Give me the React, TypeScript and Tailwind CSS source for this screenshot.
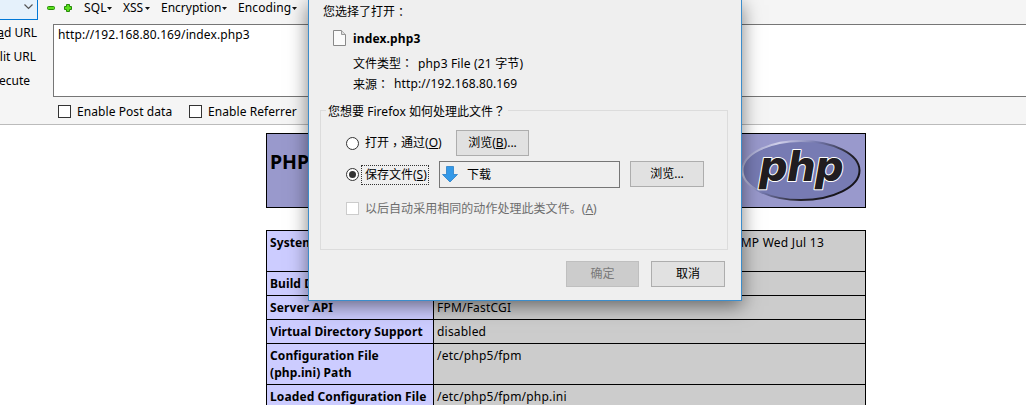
import type { ReactNode } from "react";

function Check({ label, className }: { label: string; className: string }) {
  return (
    <label className={`flex items-center gap-[6px] ${className}`}>
      <span className="h-[13px] w-[13px] border border-[#333] bg-white" />
      {label}
    </label>
  );
}

function Toolbar() {
  return (
    <header className="h-[125px] w-full border-b border-[#bbbbbb] bg-[#f5f5f5]">
      <div className="flex h-[20px]">
        <div className="flex w-[38px] justify-end border-r border-b border-[#0078d7] bg-[#e5f1fb] pr-[4px]">
          <svg className="mt-[3px] h-[8px] w-[9px]" viewBox="0 0 9 8" fill="none" stroke="#555" strokeWidth="1.2">
            <path d="M.5 1.5 4.5 5.5 8.5 1.5" />
          </svg>
        </div>
        <svg className="ml-[9px] mt-[4px] h-[8px] w-[8px]" viewBox="0 0 8 8">
          <rect x=".5" y="2.5" width="7" height="3" rx="1" fill="#5be01c" stroke="#278a08" />
        </svg>
        <svg className="ml-[9px] mt-[4px] h-[8px] w-[8px]" viewBox="0 0 8 8">
          <path d="M2.5.5h3v2h2v3h-2v2h-3v-2h-2v-3h2z" fill="#5be01c" stroke="#278a08" strokeLinejoin="round" />
        </svg>
        <nav className="flex h-[16px] items-center pl-[12px]">
          <MenuItem className="w-[39px]" text="w-[23px] tracking-[0.1px]" label="SQL" />
          <MenuItem className="w-[38px]" text="w-[22px]" label="XSS" />
          <MenuItem className="w-[77px]" text="w-[61px]" label="Encryption" />
          <MenuItem className="w-[70px]" text="w-[54px] tracking-[0.1px]" label="Encoding" />
        </nav>
      </div>
      <div className="mt-[4px] flex h-[73px]">
        <div className="flex w-[53px] flex-col items-end leading-[24px]">
          <div className="-mt-[3px] mr-[16px] whitespace-nowrap">Lo<u>a</u>d URL</div>
          <div className="mr-[17px] whitespace-nowrap">Split URL</div>
          <div className="mr-[23px] whitespace-nowrap">Execute</div>
        </div>
        <div className="flex-1 border border-r-0 border-[#767676] bg-white pl-[4px] leading-[20px] tracking-[0.11px]">
          http://192.168.80.169/index.php3
        </div>
      </div>
      <div className="flex h-[27px] items-center pt-[2px] pl-[58px] tracking-[0.07px]">
        <Check label="Enable Post data" className="w-[131px]" />
        <Check label="Enable Referrer" className="w-[130px]" />
      </div>
    </header>
  );
}

function MenuItem({ label, className, text }: { label: string; className: string; text: string }) {
  return (
    <div className={`flex shrink-0 items-center whitespace-nowrap ${className}`}>
      <span className={text}>{label}</span>
      <svg className="h-[3px] w-[5px]" viewBox="0 0 5 3">
        <path d="M0 0h5L2.500 3z" fill="#111" />
      </svg>
    </div>
  );
}

function PhpLogo() {
  return (
    <svg className="h-[64px] w-[120px]" viewBox="0 0 120 64">
      <defs>
        <linearGradient id="rim" x1="0" y1="0" x2="1" y2=".55">
          <stop offset="0" stopColor="#7478ad" />
          <stop offset=".25" stopColor="#d0d0ea" />
          <stop offset=".5" stopColor="#7377ac" />
          <stop offset=".8" stopColor="#25232b" />
          <stop offset="1" stopColor="#17151b" />
        </linearGradient>
      </defs>
      <ellipse cx="60" cy="32.500" rx="58.500" ry="29.500" fill="#777bb3" stroke="url(#rim)" strokeWidth="2" />
      <g fontFamily="Inter, sans-serif" fontSize="42" fontWeight="800" fontStyle="italic" strokeLinejoin="round">
        <text
          x="18.500"
          y="43"
          textLength="84"
          lengthAdjust="spacingAndGlyphs"
          fill="#211d20"
          stroke="#fff"
          strokeWidth="2"
          paintOrder="stroke"
        >
          php
        </text>
      </g>
    </svg>
  );
}

function Row({ name, value, height }: { name: ReactNode; value?: ReactNode; height: string }) {
  return (
    <div className={`flex border-b border-black leading-[17px] ${height}`}>
      <div className="w-[167px] shrink-0 whitespace-nowrap border-r border-black bg-[#ccccff] pt-[3px] pl-[3px] font-bold tracking-[0.1px]">
        {name}
      </div>
      <div className="flex-1 bg-[#cccccc] pt-[3px] pl-[3px] tracking-[0.2px]">{value}</div>
    </div>
  );
}

function PhpInfo() {
  return (
    <main className="ml-[266px] w-[600px] pt-[8px]">
      <div className="flex h-[75px] items-start justify-between border border-black bg-[#9999cc] pt-[4px] pr-[4px] pl-[3px]">
        <h1 className="mt-[10px] whitespace-nowrap text-[19.5px] leading-[28px] font-bold">PHP Version</h1>
        <PhpLogo />
      </div>
      <div className="mt-[22px] border border-b-0 border-black">
        <Row name="System" height="h-[41px]" value={<div className="pr-[41px] text-right tracking-[0.25px]">SMP Wed Jul 13</div>} />
        <Row name="Build Date" height="h-[24px]" />
        <Row name="Server API" height="h-[24px]" value="FPM/FastCGI" />
        <Row name="Virtual Directory Support" height="h-[24px]" value="disabled" />
        <Row name={<>Configuration File<br />(php.ini) Path</>} height="h-[41px]" value="/etc/php5/fpm" />
        <Row name="Loaded Configuration File" height="h-[24px]" value="/etc/php5/fpm/php.ini" />
      </div>
    </main>
  );
}

function Button({ children, className, disabled }: { children: ReactNode; className: string; disabled?: boolean }) {
  const look = disabled ? "border-[#bfbfbf] bg-[#cccccc] text-[#7a7a7a]" : "border-[#adadad] bg-[#e1e1e1]";
  return (
    <button className={`flex h-[26px] items-center justify-center border whitespace-nowrap ${look} ${className}`}>
      {children}
    </button>
  );
}

function Mark({ children }: { children: string }) {
  return <span className="font-['Noto_Sans_CJK_TC',sans-serif]" lang="zh-TW">{children}</span>;
}

function Radio({ on }: { on?: boolean }) {
  return (
    <svg className="h-[13px] w-[13px] shrink-0" viewBox="0 0 13 13">
      <circle cx="6.500" cy="6.500" r="6" fill="#fff" stroke="#333" />
      {on && <circle cx="6.500" cy="6.500" r="3.500" fill="#333" />}
    </svg>
  );
}

function Dialog() {
  return (
    <section className="absolute top-0 left-[308px] h-[301px] w-[434px] border border-t-0 border-[#3c8dcb] bg-[#efefef] whitespace-nowrap shadow-[0_5px_18px_rgba(0,0,0,0.5)]">
      <div className="flex h-[24px] items-center pl-[14px]">您选择了打开<Mark>：</Mark></div>
      <div className="flex h-[28px] items-center pl-[24px]">
        <svg className="h-[16px] w-[13px]" viewBox="0 0 13 16">
          <path d="M.5.5h8l4 4v11H.5z" fill="#fafafa" stroke="#888" />
          <path d="M8.500.5v4h4" fill="#ddd" stroke="#999" />
        </svg>
        <b className="mt-px ml-[7px] tracking-[0.15px]">index.php3</b>
      </div>
      <div className="flex h-[22px] items-center pl-[44px]">
        <span className="w-[65px]">文件类型<Mark>：</Mark></span>
        <span className="mt-px tracking-[0.16px]">php3 File (21 字节)</span>
      </div>
      <div className="flex h-[20px] items-center pl-[44px]">
        <span className="w-[41px]">来源<Mark>：</Mark></span>
        <span className="tracking-[0.12px]">http://192.168.80.169</span>
      </div>
      <div className="mt-[16px] ml-[11px] h-[140px] w-[408px] border border-[#dcdcdc]">
        <div className="-mt-[10px] ml-[5px] h-[20px] w-[182px] bg-[#efefef] pl-[2px] leading-[20px] tracking-[0.03px]">
          您想要 Firefox 如何处理此文件<Mark>？</Mark>
        </div>
        <div className="mt-[9px] flex h-[26px] items-center pl-[25px]">
          <Radio />
          <span className="ml-[6px] flex w-[91px] pt-px">
            打开<span className="pt-[3px] pb-0 leading-[15px]"><Mark>，</Mark></span>
            <span>通过(<u>O</u>)</span>
          </span>
          <Button className="w-[73px]">浏览(<u>B</u>)...</Button>
        </div>
        <div className="mt-[5px] flex h-[27px] items-center pl-[25px]">
          <Radio on />
          <span className="ml-[2px] flex h-[20px] w-[68px] items-center border border-dotted border-[#333] pl-[3px]">
            <span>保存文件(<u>S</u>)</span>
          </span>
          <div className="ml-[10px] flex h-[27px] w-[181px] items-center border border-[#767676] pl-[2px]">
            <svg className="h-[17px] w-[16px]" viewBox="0 0 16 17">
              <path d="M4.500.5h7v8h4L8 16 .5 8.500h4z" fill="#3399e8" stroke="#2a7fc8" strokeWidth=".8" />
            </svg>
            <span className="ml-[9px]">下载</span>
          </div>
          <Button className="-mt-px ml-[10px] w-[74px]">浏览...</Button>
        </div>
        <div className="mt-[10px] flex h-[21px] items-center pl-[25px] text-[#6d6d6d]">
          <span className="mr-[6px] h-[13px] w-[13px] border border-[#cccccc] bg-white" />
          <span className="tracking-[0.04px]">以后自动采用相同的动作处理此类文件。(<u>A</u>)</span>
        </div>
      </div>
      <div className="mt-[11px] flex justify-end gap-[12px] pr-[16px]">
        <Button disabled className="w-[73px]">确定</Button>
        <Button className="w-[74px]">取消</Button>
      </div>
    </section>
  );
}

export default function App() {
  return (
    <div className="relative h-[405px] w-[1026px] overflow-hidden bg-white font-['Noto_Sans','Noto_Sans_CJK_SC',sans-serif] text-[12px] text-black">
      <Toolbar />
      <PhpInfo />
      <Dialog />
    </div>
  );
}
